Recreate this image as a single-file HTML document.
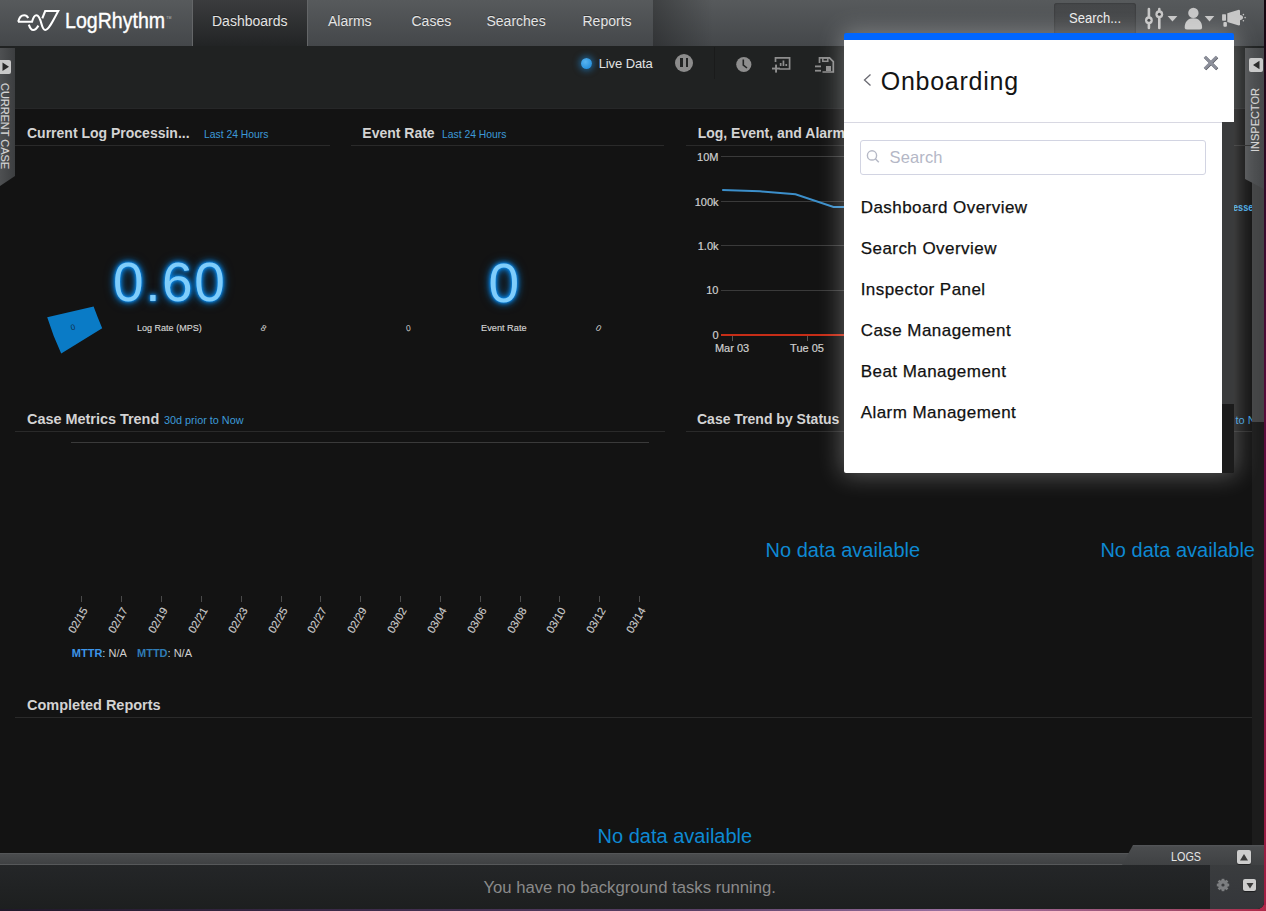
<!DOCTYPE html>
<html><head><meta charset="utf-8"><style>
*{margin:0;padding:0;box-sizing:border-box}
html,body{width:1266px;height:911px;overflow:hidden;background:#141014}
body{font-family:"Liberation Sans",sans-serif;position:relative}
.a{position:absolute}
.t{position:absolute;white-space:nowrap;line-height:1}
.b{font-weight:bold}
#win{position:absolute;left:0;top:0;width:1264px;height:909px;background:#131313;overflow:hidden;border-bottom-right-radius:7px}
</style></head><body><div class="a" style="left:1262px;top:0;width:4px;height:911px;background:linear-gradient(#14060f,#3a0a2e 25%,#6a0a42 55%,#a81e44)"></div><div class="a" style="left:0;top:905px;width:1266px;height:6px;background:linear-gradient(90deg,#20182a,#3e2c4c 30%,#5a4066 55%,#9a70a0 75%,#a05070 92%,#b02848)"></div><div id="win">
<div class="a" style="left:0;top:0;width:1264px;height:46px;background:linear-gradient(#575a5c,#44474a)"></div>
<div class="a" style="left:653px;top:0;width:60px;height:46px;background:linear-gradient(90deg,rgba(0,0,0,.28),rgba(0,0,0,0))"></div>
<svg class="a" style="left:0;top:0" width="70" height="46" viewBox="0 0 70 46"><g fill="none" stroke="#fff" stroke-width="2.1" stroke-linecap="butt" stroke-linejoin="miter">
<path d="M18.2,21.8 C19.2,17.2 21.5,15.3 24.2,15.3 C26,15.3 27.4,16.5 28.2,18"/>
<path d="M18,21.8 H32 C33.2,17.5 34.6,15.3 36.4,15.3 C39,15.3 40.3,19.5 41.5,24 C42.6,28 43.6,30 45.3,30 C48.5,30 52.5,22 58.2,11 H45.2 L42.3,18.4"/>
<path d="M28.8,24.6 C30,28.2 31.5,30 33.2,30 C35,30 36.8,28.3 38.4,25.6"/>
</g></svg>
<div class="t " style="left:65.0px;top:9.9px;font-size:22px;color:#fff;transform:scaleX(.89);transform-origin:0 0;-webkit-text-stroke:.35px #fff">LogRhythm</div>
<div class="t" style="left:166.3px;top:17.3px;font-size:3.5px;color:#bbb">TM</div>
<div class="a" style="left:192px;top:0;width:116px;height:46px;background:linear-gradient(#3b3c3e,#222425);border-left:1px solid #646668;border-right:1px solid #646668"></div>
<div class="t " style="left:212.0px;top:14.1px;font-size:14px;color:#e4e4e4;text-shadow:0 -1px 0 rgba(0,0,0,.35)">Dashboards</div>
<div class="t " style="left:328.0px;top:14.1px;font-size:14px;color:#e4e4e4;text-shadow:0 -1px 0 rgba(0,0,0,.35)">Alarms</div>
<div class="t " style="left:411.5px;top:14.1px;font-size:14px;color:#e4e4e4;text-shadow:0 -1px 0 rgba(0,0,0,.35)">Cases</div>
<div class="t " style="left:486.5px;top:14.1px;font-size:14px;color:#e4e4e4;text-shadow:0 -1px 0 rgba(0,0,0,.35)">Searches</div>
<div class="t " style="left:582.5px;top:14.1px;font-size:14px;color:#e4e4e4;text-shadow:0 -1px 0 rgba(0,0,0,.35)">Reports</div>
<div class="a" style="left:1054px;top:3px;width:82px;height:32px;background:linear-gradient(#46484a,#3f4143);border-radius:3px;box-shadow:inset 0 0 2px rgba(0,0,0,.45)"></div>
<div class="t " style="left:1068.7px;top:11.0px;font-size:14px;color:#ececec;transform:scaleX(.93);transform-origin:0 0">Search...</div>
<svg class="a" style="left:1140px;top:0" width="124" height="40" viewBox="1140 0 124 40">
<g stroke="#c6c6c6" stroke-width="2.6" stroke-linecap="round">
<line x1="1148.9" y1="9" x2="1148.9" y2="28"/><line x1="1159.3" y1="9" x2="1159.3" y2="28"/></g>
<g fill="#c6c6c6"><circle cx="1148.9" cy="20.2" r="3.9"/><circle cx="1159.3" cy="14.2" r="3.9"/></g>
<g fill="#3e4042"><circle cx="1148.9" cy="20.2" r="1.5"/><circle cx="1159.3" cy="14.2" r="1.5"/></g>
<path d="M1167.6,15.9 L1177.4,15.9 L1172.5,21.5Z" fill="#c6c6c6"/>
<circle cx="1193.4" cy="12.9" r="5.2" fill="#c6c6c6"/>
<path d="M1184.7,28 C1184.4,21.5 1188.5,18.3 1193.4,18.3 C1198.3,18.3 1202.4,21.5 1202.1,28 Q1201.8,29.6 1199.5,29.6 H1187.3 Q1185,29.6 1184.7,28Z" fill="#c6c6c6"/>
<path d="M1204.7,15.9 L1214.3,15.9 L1209.5,21.5Z" fill="#c6c6c6"/>
<g fill="#c6c6c6">
<rect x="1222.1" y="14.2" width="3.9" height="6.5" rx=".6"/>
<rect x="1223.4" y="22" width="3.5" height="4.8" rx="1"/>
<path d="M1227.3,13.3 L1238.8,9.8 Q1240,9.8 1240,11 V24.3 Q1240,25.5 1238.8,25.5 L1227.3,22Z"/>
<path d="M1240,15 Q1243,15.2 1243,17.6 Q1243,20 1240,20.2Z"/>
<circle cx="1243.4" cy="14.6" r=".8"/><circle cx="1245.1" cy="17.6" r=".8"/><circle cx="1243.4" cy="20.7" r=".8"/></g>
</svg>
<div class="a" style="left:0;top:46px;width:1264px;height:63px;background:#202222;border-bottom:1px solid #262728"></div>
<div class="a" style="left:580.9px;top:57.9px;width:11px;height:11px;border-radius:50%;background:radial-gradient(circle at 40% 35%,#58b4f0,#1584d6);box-shadow:0 0 6px 2px rgba(30,140,220,.55)"></div>
<div class="t " style="left:598.7px;top:56.7px;font-size:13px;color:#e2e2e2;letter-spacing:-.1px">Live Data</div>
<div class="a" style="left:675.2px;top:53.9px;width:18px;height:18px;border-radius:50%;background:#8c8c8c"></div>
<div class="a" style="left:680.4px;top:58.3px;width:2.7px;height:8.8px;background:#232525"></div>
<div class="a" style="left:685.6px;top:58.3px;width:2.7px;height:8.8px;background:#232525"></div>
<div class="a" style="left:714px;top:47px;width:1px;height:32px;background:#1a1b1b"></div>
<svg class="a" style="left:730px;top:50px" width="110" height="28" viewBox="730 50 110 28">
<circle cx="743.8" cy="64.5" r="7.6" fill="#8e8e8e"/>
<path d="M743.3,59.5 V65 L747,68" fill="none" stroke="#232525" stroke-width="1.6"/>
<g fill="none" stroke="#8e8e8e" stroke-width="1.7">
<path d="M775.5,62 V57.8 H789.6 V69 H779.5"/>
</g>
<g fill="#8e8e8e"><rect x="779.8" y="63" width="1.7" height="3"/><rect x="782.6" y="60.5" width="1.7" height="5.5"/><rect x="785.4" y="64" width="1.7" height="2"/>
<rect x="772" y="67.6" width="8" height="1.9"/><rect x="775.1" y="64.6" width="1.9" height="8"/></g>
<path d="M819.5,63 V57.8 H829.5 L833.3,61.6 V72 H822.5" fill="none" stroke="#8e8e8e" stroke-width="1.7"/>
<rect x="822.8" y="58" width="5" height="3.3" fill="none" stroke="#8e8e8e" stroke-width="1.5"/>
<rect x="826" y="66" width="5" height="5" fill="#8e8e8e"/>
<rect x="815" y="65.5" width="6" height="1.8" fill="#8e8e8e"/><rect x="815" y="69.8" width="6" height="1.8" fill="#8e8e8e"/>
</svg>
<div class="a" style="left:0;top:48px;width:15px;height:138px;background:linear-gradient(90deg,#4e5052,#3c3e40);clip-path:polygon(0 0,100% 0,100% 128px,0 138px)"></div>
<div class="a" style="left:-2px;top:59.6px;width:13.4px;height:14.6px;background:#c9c9c9;border-radius:2px"></div>
<svg class="a" style="left:0;top:59px" width="12" height="16"><path d="M2.5,3.5 L9,7.8 L2.5,12Z" fill="#2a2a2a"/></svg>
<div class="t" style="left:9.5px;top:83px;font-size:11px;color:#d4d4d4;transform:rotate(90deg);transform-origin:0 0;letter-spacing:-.05px;-webkit-text-stroke:.15px #d4d4d4">CURRENT CASE</div>
<div class="t " style="left:1233.2px;top:201.6px;font-size:11.5px;color:#45a6e0;font-weight:bold;transform:scaleX(.8);transform-origin:0 0">esse</div>
<div class="t " style="left:1235.5px;top:414.7px;font-size:11px;color:#3d9ad8;">to N</div>
<div class="a" style="left:1252px;top:108px;width:12px;height:745px;background:#1c1c1c"></div>
<div class="a" style="left:1252px;top:108px;width:12px;height:314px;background:#434445"></div>
<div class="a" style="left:1245px;top:48px;width:19px;height:141px;background:linear-gradient(90deg,#505254,#46484a);clip-path:polygon(0 0,100% 0,100% 141px,0 131px)"></div>
<div class="a" style="left:1248.5px;top:58px;width:14.5px;height:14px;background:#c9c9c9;border-radius:2px"></div>
<svg class="a" style="left:1248px;top:58px" width="16" height="14"><path d="M11.5,2.8 L5,7 L11.5,11.2Z" fill="#2a2a2a"/></svg>
<div class="t" style="left:1250px;top:152px;font-size:11px;color:#d4d4d4;transform:rotate(-90deg);transform-origin:0 0;-webkit-text-stroke:.15px #d4d4d4">INSPECTOR</div>
<div class="t " style="left:27.0px;top:126.0px;font-size:14px;color:#d3d3d3;font-weight:bold">Current Log Processin...</div>
<div class="t " style="left:204.1px;top:129.2px;font-size:11px;color:#3d9ad8;transform:scaleX(.94);transform-origin:0 0">Last 24 Hours</div>
<div class="a" style="left:15px;top:145px;width:315px;height:1px;background:#2a2a2a"></div>
<div class="t " style="left:362.3px;top:125.9px;font-size:14px;color:#d3d3d3;font-weight:bold">Event Rate</div>
<div class="t " style="left:442.2px;top:129.2px;font-size:11px;color:#3d9ad8;transform:scaleX(.94);transform-origin:0 0">Last 24 Hours</div>
<div class="a" style="left:351px;top:145px;width:313px;height:1px;background:#2a2a2a"></div>
<div class="t " style="left:697.7px;top:126.0px;font-size:14px;color:#d3d3d3;font-weight:bold">Log, Event, and Alarm Volume</div>
<div class="a" style="left:686px;top:145px;width:566px;height:1px;background:#2a2a2a"></div>
<div class="t " style="left:113.0px;top:255.0px;font-size:55px;color:#7fcdfb;text-shadow:0 0 2px #0a8cf0,0 0 4px #0a8cf0,0 0 7px #0a8cf0,0 0 11px rgba(10,140,240,.55);letter-spacing:1.6px">0.60</div>
<div class="t " style="left:488.6px;top:256.1px;font-size:55px;color:#7fcdfb;text-shadow:0 0 2px #0a8cf0,0 0 4px #0a8cf0,0 0 7px #0a8cf0,0 0 11px rgba(10,140,240,.55)">0</div>
<svg class="a" style="left:40px;top:300px" width="70" height="60" viewBox="40 300 70 60"><path d="M47.2,317.3 L93.6,306.4 Q97.5,317 102.2,328.2 L61.2,353.4 Q53,336 47.2,317.3Z" fill="#0a7bc6"/></svg>
<div class="t" style="left:70.5px;top:324px;font-size:8px;color:#10304a;transform:rotate(-15deg)">0</div>
<div class="t " style="left:136.7px;top:323.4px;font-size:9.5px;color:#d4d4d4;transform:scaleX(.95);transform-origin:0 0;-webkit-text-stroke:.15px #d4d4d4">Log Rate (MPS)</div>
<div class="t " style="left:261.0px;top:324.2px;font-size:8.5px;color:#d4d4d4;font-style:italic;transform:rotate(20deg)">8</div>
<div class="t " style="left:480.9px;top:323.2px;font-size:9.5px;color:#d4d4d4;transform:scaleX(.97);transform-origin:0 0;-webkit-text-stroke:.15px #d4d4d4">Event Rate</div>
<div class="t " style="left:406.0px;top:324.2px;font-size:8.5px;color:#d4d4d4;font-style:italic;transform:rotate(-20deg)">0</div>
<div class="t " style="left:596.0px;top:324.2px;font-size:8.5px;color:#d4d4d4;font-style:italic;transform:rotate(20deg)">0</div>
<div class="t" style="left:640px;width:78.5px;text-align:right;top:151.7px;font-size:11px;color:#cfcfcf;-webkit-text-stroke:.2px #cfcfcf">10M</div>
<div class="t" style="left:640px;width:78.5px;text-align:right;top:196.6px;font-size:11px;color:#cfcfcf;-webkit-text-stroke:.2px #cfcfcf">100k</div>
<div class="t" style="left:640px;width:78.5px;text-align:right;top:241.1px;font-size:11px;color:#cfcfcf;-webkit-text-stroke:.2px #cfcfcf">1.0k</div>
<div class="t" style="left:640px;width:78.5px;text-align:right;top:285.0px;font-size:11px;color:#cfcfcf;-webkit-text-stroke:.2px #cfcfcf">10</div>
<div class="t" style="left:640px;width:78.5px;text-align:right;top:330.1px;font-size:11px;color:#cfcfcf;-webkit-text-stroke:.2px #cfcfcf">0</div>
<div class="a" style="left:721px;top:156px;width:140px;height:1px;background:#3a3a3a"></div>
<div class="a" style="left:721px;top:201px;width:140px;height:1px;background:#3a3a3a"></div>
<div class="a" style="left:721px;top:245px;width:140px;height:1px;background:#3a3a3a"></div>
<div class="a" style="left:721px;top:290px;width:140px;height:1px;background:#3a3a3a"></div>
<div class="a" style="left:721px;top:334px;width:140px;height:2px;background:#c62d17"></div>
<div class="a" style="left:732px;top:336px;width:1px;height:5px;background:#555"></div>
<div class="a" style="left:807px;top:336px;width:1px;height:5px;background:#555"></div>
<div class="t" style="left:692px;width:80px;text-align:center;top:342.9px;font-size:11px;color:#cfcfcf;-webkit-text-stroke:.2px #cfcfcf">Mar 03</div>
<div class="t" style="left:767px;width:80px;text-align:center;top:342.9px;font-size:11px;color:#cfcfcf;-webkit-text-stroke:.2px #cfcfcf">Tue 05</div>
<svg class="a" style="left:715px;top:180px" width="140" height="40" viewBox="715 180 140 40"><polyline points="722.2,189.9 759.9,191.3 795.5,194.2 833.5,207 860,207" fill="none" stroke="#3c8fca" stroke-width="2"/></svg>
<div class="t " style="left:27.0px;top:411.5px;font-size:14px;color:#d3d3d3;font-weight:bold;transform:scaleX(1.03);transform-origin:0 0">Case Metrics Trend</div>
<div class="t " style="left:164.0px;top:414.7px;font-size:11px;color:#3d9ad8;transform:scaleX(.985);transform-origin:0 0">30d prior to Now</div>
<div class="a" style="left:15px;top:431px;width:650px;height:1px;background:#2a2a2a"></div>
<div class="a" style="left:71px;top:441.5px;width:578px;height:1px;background:#3a3a3a"></div>
<div class="a" style="left:81.0px;top:596px;width:1px;height:6px;background:#4a4a4a"></div>
<div class="t" style="left:56.9px;top:603.2px;width:28px;text-align:right;font-size:11px;-webkit-text-stroke:.15px #cbcbcb;color:#cbcbcb;transform:rotate(-60deg);transform-origin:100% 50%">02/15</div>
<div class="a" style="left:120.8px;top:596px;width:1px;height:6px;background:#4a4a4a"></div>
<div class="t" style="left:96.7px;top:603.2px;width:28px;text-align:right;font-size:11px;-webkit-text-stroke:.15px #cbcbcb;color:#cbcbcb;transform:rotate(-60deg);transform-origin:100% 50%">02/17</div>
<div class="a" style="left:160.9px;top:596px;width:1px;height:6px;background:#4a4a4a"></div>
<div class="t" style="left:136.8px;top:603.2px;width:28px;text-align:right;font-size:11px;-webkit-text-stroke:.15px #cbcbcb;color:#cbcbcb;transform:rotate(-60deg);transform-origin:100% 50%">02/19</div>
<div class="a" style="left:200.7px;top:596px;width:1px;height:6px;background:#4a4a4a"></div>
<div class="t" style="left:176.6px;top:603.2px;width:28px;text-align:right;font-size:11px;-webkit-text-stroke:.15px #cbcbcb;color:#cbcbcb;transform:rotate(-60deg);transform-origin:100% 50%">02/21</div>
<div class="a" style="left:240.8px;top:596px;width:1px;height:6px;background:#4a4a4a"></div>
<div class="t" style="left:216.7px;top:603.2px;width:28px;text-align:right;font-size:11px;-webkit-text-stroke:.15px #cbcbcb;color:#cbcbcb;transform:rotate(-60deg);transform-origin:100% 50%">02/23</div>
<div class="a" style="left:280.9px;top:596px;width:1px;height:6px;background:#4a4a4a"></div>
<div class="t" style="left:256.8px;top:603.2px;width:28px;text-align:right;font-size:11px;-webkit-text-stroke:.15px #cbcbcb;color:#cbcbcb;transform:rotate(-60deg);transform-origin:100% 50%">02/25</div>
<div class="a" style="left:319.8px;top:596px;width:1px;height:6px;background:#4a4a4a"></div>
<div class="t" style="left:295.7px;top:603.2px;width:28px;text-align:right;font-size:11px;-webkit-text-stroke:.15px #cbcbcb;color:#cbcbcb;transform:rotate(-60deg);transform-origin:100% 50%">02/27</div>
<div class="a" style="left:359.7px;top:596px;width:1px;height:6px;background:#4a4a4a"></div>
<div class="t" style="left:335.6px;top:603.2px;width:28px;text-align:right;font-size:11px;-webkit-text-stroke:.15px #cbcbcb;color:#cbcbcb;transform:rotate(-60deg);transform-origin:100% 50%">02/29</div>
<div class="a" style="left:399.9px;top:596px;width:1px;height:6px;background:#4a4a4a"></div>
<div class="t" style="left:375.8px;top:603.2px;width:28px;text-align:right;font-size:11px;-webkit-text-stroke:.15px #cbcbcb;color:#cbcbcb;transform:rotate(-60deg);transform-origin:100% 50%">03/02</div>
<div class="a" style="left:440.0px;top:596px;width:1px;height:6px;background:#4a4a4a"></div>
<div class="t" style="left:415.9px;top:603.2px;width:28px;text-align:right;font-size:11px;-webkit-text-stroke:.15px #cbcbcb;color:#cbcbcb;transform:rotate(-60deg);transform-origin:100% 50%">03/04</div>
<div class="a" style="left:479.8px;top:596px;width:1px;height:6px;background:#4a4a4a"></div>
<div class="t" style="left:455.7px;top:603.2px;width:28px;text-align:right;font-size:11px;-webkit-text-stroke:.15px #cbcbcb;color:#cbcbcb;transform:rotate(-60deg);transform-origin:100% 50%">03/06</div>
<div class="a" style="left:519.9px;top:596px;width:1px;height:6px;background:#4a4a4a"></div>
<div class="t" style="left:495.8px;top:603.2px;width:28px;text-align:right;font-size:11px;-webkit-text-stroke:.15px #cbcbcb;color:#cbcbcb;transform:rotate(-60deg);transform-origin:100% 50%">03/08</div>
<div class="a" style="left:558.7px;top:596px;width:1px;height:6px;background:#4a4a4a"></div>
<div class="t" style="left:534.6px;top:603.2px;width:28px;text-align:right;font-size:11px;-webkit-text-stroke:.15px #cbcbcb;color:#cbcbcb;transform:rotate(-60deg);transform-origin:100% 50%">03/10</div>
<div class="a" style="left:598.8px;top:596px;width:1px;height:6px;background:#4a4a4a"></div>
<div class="t" style="left:574.7px;top:603.2px;width:28px;text-align:right;font-size:11px;-webkit-text-stroke:.15px #cbcbcb;color:#cbcbcb;transform:rotate(-60deg);transform-origin:100% 50%">03/12</div>
<div class="a" style="left:639.0px;top:596px;width:1px;height:6px;background:#4a4a4a"></div>
<div class="t" style="left:614.9px;top:603.2px;width:28px;text-align:right;font-size:11px;-webkit-text-stroke:.15px #cbcbcb;color:#cbcbcb;transform:rotate(-60deg);transform-origin:100% 50%">03/14</div>
<div class="t " style="left:71.8px;top:648.2px;font-size:11px;color:#d0d0d0;"><b style="color:#3d95e8">MTTR</b>: N/A</div>
<div class="t " style="left:137.0px;top:648.2px;font-size:11px;color:#d0d0d0;"><b style="color:#2f7bb5">MTTD</b>: N/A</div>
<div class="t " style="left:697.0px;top:411.5px;font-size:14px;color:#d3d3d3;font-weight:bold">Case Trend by Status</div>
<div class="a" style="left:686px;top:431px;width:566px;height:1px;background:#2a2a2a"></div>
<div class="t " style="left:765.6px;top:540.0px;font-size:20px;color:#0e89d2;">No data available</div>
<div class="t " style="left:1100.4px;top:540.0px;font-size:20px;color:#0e89d2;">No data available</div>
<div class="t " style="left:26.8px;top:697.8px;font-size:14px;color:#d3d3d3;font-weight:bold;transform:scaleX(1.035);transform-origin:0 0">Completed Reports</div>
<div class="a" style="left:15px;top:716.5px;width:1237px;height:1px;background:#2a2a2a"></div>
<div class="t " style="left:597.6px;top:826.1px;font-size:20px;color:#0e89d2;">No data available</div>
<div class="a" style="left:0;top:853px;width:1264px;height:12px;background:linear-gradient(#4a4c4e,#3f4143);border-top:1px solid #545658;border-bottom:1px solid #56585a"></div>
<div class="a" style="left:1122px;top:845px;width:142px;height:20px;background:linear-gradient(#55575a 0,#4a4c4e 2px,#3f4143);clip-path:polygon(11px 0,100% 0,100% 100%,0 100%)"></div>
<div class="t " style="left:1171.2px;top:850.8px;font-size:12px;color:#e6e6e6;transform:scaleX(.9);transform-origin:0 0">LOGS</div>
<div class="a" style="left:1236.8px;top:850px;width:14.5px;height:14.4px;background:#cdcdcd;border-radius:2px;box-shadow:0 1px 1px rgba(0,0,0,.5)"></div>
<svg class="a" style="left:1236px;top:850px" width="16" height="15"><path d="M4,10.5 L8,4 L12,10.5Z" fill="#3a3a3a"/></svg>
<div class="a" style="left:0;top:865px;width:1264px;height:44px;background:linear-gradient(#242628,#1d1f1f)"></div>
<div class="a" style="left:1210px;top:865px;width:54px;height:44px;background:linear-gradient(#3a3c3e,#34363a)"></div>
<div class="t " style="left:483.4px;top:879.9px;font-size:16.7px;color:#8a8a8a;">You have no background tasks running.</div>
<svg class="a" style="left:1214.4px;top:876px" width="18" height="18" viewBox="0 0 18 18"><g fill="#7c7e80" transform="translate(9,9)">
<circle r="4.9"/><rect x="-1.4" y="-6.2" width="2.8" height="12.4"/><rect x="-1.4" y="-6.2" width="2.8" height="12.4" transform="rotate(45)"/><rect x="-1.4" y="-6.2" width="2.8" height="12.4" transform="rotate(90)"/><rect x="-1.4" y="-6.2" width="2.8" height="12.4" transform="rotate(135)"/></g>
<circle cx="9" cy="9" r="1.6" fill="#3a3c3e"/></svg>
<div class="a" style="left:1243.4px;top:878.9px;width:12.8px;height:12.4px;background:#cdcdcd;border-radius:2px;box-shadow:0 1px 1px rgba(0,0,0,.5)"></div>
<svg class="a" style="left:1243px;top:879px" width="14" height="13"><path d="M3.5,4 L10.5,4 L7,9.5Z" fill="#3a3a3a"/></svg>
<div class="a" style="left:844px;top:33px;width:390px;height:440px;border-radius:3px 3px 2px 2px;box-shadow:0 0 24px 2px rgba(255,255,255,.31)"></div>
<div class="a" style="left:844px;top:33px;width:390px;height:90px;background:#fff;border-top:7px solid #0066ff;border-radius:2px 2px 0 0"></div>
<svg class="a" style="left:860px;top:70px" width="14" height="20"><path d="M10.5,4.5 L4.5,10 L10.5,15.5" fill="none" stroke="#6a6a72" stroke-width="1.3"/></svg>
<div class="t " style="left:880.7px;top:68.8px;font-size:25px;color:#141414;letter-spacing:.75px">Onboarding</div>
<svg class="a" style="left:1198px;top:51px" width="24" height="24"><path d="M6.7,5.7 L18.7,17.7 M18.7,5.7 L6.7,17.7" stroke="#55585f" stroke-width="3" transform="translate(.5,.6)"/><path d="M6.7,5.7 L18.7,17.7 M18.7,5.7 L6.7,17.7" stroke="#8c8f9a" stroke-width="3"/></svg>
<div class="a" style="left:844px;top:122px;width:378px;height:351px;background:#fff;border-top:1px solid #d8d8e2;border-radius:0 0 0 2px"></div>
<div class="a" style="left:1222px;top:122px;width:12px;height:351px;border-bottom-right-radius:2px;background:#1b1b1b"></div>
<div class="a" style="left:1222px;top:122px;width:12px;height:282px;background:#3a3b3c"></div>
<div class="a" style="left:860px;top:139.5px;width:346px;height:35px;border:1px solid #d2d4e2;border-radius:3px"></div>
<svg class="a" style="left:864px;top:147px" width="20" height="20"><circle cx="8" cy="8.4" r="4.6" fill="none" stroke="#b6b9c6" stroke-width="1.4"/><path d="M11.3,11.7 L14.8,15.2" stroke="#b6b9c6" stroke-width="1.5"/></svg>
<div class="t " style="left:889.5px;top:148.9px;font-size:16.5px;color:#b4b7c6;letter-spacing:.15px">Search</div>
<div class="t " style="left:860.7px;top:199.2px;font-size:17px;color:#111;letter-spacing:.45px;-webkit-text-stroke:.25px #111">Dashboard Overview</div>
<div class="t " style="left:860.7px;top:240.2px;font-size:17px;color:#111;letter-spacing:.45px;-webkit-text-stroke:.25px #111">Search Overview</div>
<div class="t " style="left:860.7px;top:281.2px;font-size:17px;color:#111;letter-spacing:.45px;-webkit-text-stroke:.25px #111">Inspector Panel</div>
<div class="t " style="left:860.7px;top:322.2px;font-size:17px;color:#111;letter-spacing:.45px;-webkit-text-stroke:.25px #111">Case Management</div>
<div class="t " style="left:860.7px;top:363.2px;font-size:17px;color:#111;letter-spacing:.45px;-webkit-text-stroke:.25px #111">Beat Management</div>
<div class="t " style="left:860.7px;top:404.2px;font-size:17px;color:#111;letter-spacing:.45px;-webkit-text-stroke:.25px #111">Alarm Management</div>
</div></body></html>
